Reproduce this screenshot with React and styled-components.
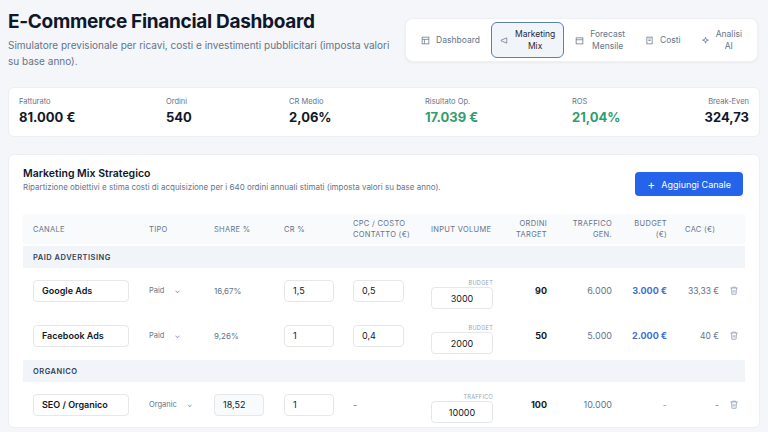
import React from "react";
import styled, { createGlobalStyle } from "styled-components";

const G = createGlobalStyle`
  body{margin:0;background:#f4f6f9;font-family:Inter,"Noto Sans",sans-serif;color:#0f172a;}
  *{box-sizing:border-box;}
`;
const Page = styled.div`padding:9px 8px 0;`;
const Header = styled.div`display:flex;justify-content:space-between;align-items:flex-start;`;
const Title = styled.h1`margin:0;font-size:19px;font-weight:700;letter-spacing:-0.3px;line-height:26px;`;
const Sub = styled.p`margin:2px 0 0;font-size:10px;color:#64748b;width:392px;line-height:16px;`;
const Nav = styled.div`display:flex;align-items:center;gap:2px;background:#fff;border:1px solid #eef0f3;border-radius:8px;padding:3px 6px;margin-right:2px;margin-top:9px;box-shadow:0 1px 3px rgba(0,0,0,.05);`;
const Tab = styled.div`display:flex;align-items:center;gap:6px;height:36px;padding:0 8px;font-size:8.5px;color:${p=>p.$a?"#1e293b":"#64748b"};text-align:center;line-height:12px;border-radius:6px;border:${p=>p.$a?"1.5px solid #5b7fb0":"1.5px solid transparent"};background:${p=>p.$a?"#f1f5f9":"transparent"};`;
const Kpis = styled.div`margin-top:18px;background:#fff;border:1px solid #eceff3;border-radius:6px;display:grid;grid-template-columns:147px 123px 136px 147px 1fr auto;padding:9px 10px 11px;`;
const Kpi = styled.div`display:flex;flex-direction:column;gap:3px;align-items:${p=>p.$r?"flex-end":"flex-start"};`;
const KL = styled.span`font-size:7.5px;color:#64748b;`;
const KV = styled.span`font-size:13px;font-weight:700;color:${p=>p.$g?"#2f9e6e":"#111827"};`;
const Card = styled.div`margin-top:17px;background:#fff;border:1px solid #eceff3;border-radius:6px;padding:8px 14px 0;`;
const CardHead = styled.div`display:flex;justify-content:space-between;align-items:flex-start;padding-right:2px;`;
const CT = styled.div`font-size:10.5px;font-weight:600;margin-top:4px;`;
const CS = styled.div`font-size:8px;color:#64748b;margin-top:2px;`;
const Btn = styled.button`border:none;background:#2563eb;color:#fff;border-radius:4px;font-family:inherit;font-size:9px;height:24px;padding:0 12px;display:flex;align-items:center;gap:6px;margin-top:9px;`;
const Grid = styled.div`display:grid;grid-template-columns:118px 65px 70px 70px 77px 78px 46px 65px 55px 52px 1fr;margin-top:18px;`;
const H = styled.div`background:#f8fafc;height:30px;display:flex;align-items:center;justify-content:${p=>p.$r?"flex-end":"flex-start"};text-align:${p=>p.$r?"right":"left"};font-size:7.5px;color:#64748b;letter-spacing:.3px;line-height:11px;padding-left:${p=>p.$p||0}px;`;
const Group = styled.div`grid-column:1/-1;background:#f1f5f9;height:22px;display:flex;align-items:center;padding-left:10px;font-size:7.5px;font-weight:600;color:#334155;letter-spacing:.5px;margin-top:2px;`;
const C = styled.div`height:${p=>p.$h||45}px;display:flex;align-items:center;justify-content:${p=>p.$r?"flex-end":"flex-start"};font-size:${p=>p.$s||9}px;font-weight:${p=>p.$b?700:400};color:${p=>p.$c||"#64748b"};padding-left:${p=>p.$p||0}px;padding-right:${p=>p.$pr||0}px;`;
const Inp = styled.div`height:22px;width:${p=>p.$w}px;border:1px solid #e5e7eb;border-radius:4px;display:flex;align-items:center;padding-left:8px;font-size:9px;font-weight:${p=>p.$b?600:400};color:#111827;background:${p=>p.$bg||"#fff"};`;
const VolWrap = styled.div`display:flex;flex-direction:column;align-items:flex-end;width:62px;margin-left:8px;margin-top:8px;`;
const VL = styled.span`font-size:5.5px;color:#94a3b8;letter-spacing:.3px;margin-bottom:1px;`;
const Vol = styled(Inp)`justify-content:center;padding:0;width:62px;`;
const Sel = styled.div`display:flex;gap:10px;align-items:center;font-size:7.5px;color:#64748b;padding-left:8px;`;

const Trash = () => (
  <svg width="10" height="11" viewBox="0 0 24 24" fill="none" stroke="#94a3b8" strokeWidth="2"><path d="M3 6h18M8 6V4h8v2M6 6l1 15h10l1-15M10 11v6M14 11v6"/></svg>
);
const Ico = ({d}) => <svg width="9" height="9" viewBox="0 0 24 24" fill="none" stroke="#64748b" strokeWidth="2">{d}</svg>;

const rows = [
  {n:"Google Ads",t:"Paid",s:"16,67%",cr:"1,5",cpc:"0,5",vl:"BUDGET",v:"3000",o:"90",tr:"6.000",b:"3.000 €",cac:"33,33 €"},
  {n:"Facebook Ads",t:"Paid",s:"9,26%",cr:"1",cpc:"0,4",vl:"BUDGET",v:"2000",o:"50",tr:"5.000",b:"2.000 €",cac:"40 €"},
];
function Row({r, org}) {
  return <>
    <C $p={10}><Inp $w={96} $b>{r.n}</Inp></C>
    <C><Sel>{r.t}<span>⌄</span></Sel></C>
    <C $p={8}>{org ? <Inp $w={50} $bg="#f8fafc">{r.s}</Inp> : <span style={{fontSize:8}}>{r.s}</span>}</C>
    <C $p={8}><Inp $w={50}>{r.cr}</Inp></C>
    <C $p={7}>{r.cpc==="-"?"-":<Inp $w={51}>{r.cpc}</Inp>}</C>
    <C><VolWrap><VL>{r.vl}</VL><Vol>{r.v}</Vol></VolWrap></C>
    <C $r $b $c="#111827">{r.o}</C>
    <C $r>{r.tr}</C>
    <C $r $c={r.b==="-"?"#94a3b8":"#3b6fd4"} $b={r.b!=="-"}>{r.b}</C>
    <C $r $s={8.5}>{r.cac}</C>
    <C $r $pr={6}><Trash/></C>
  </>;
}

export default function App() {
  return <Page><G/>
    <Header>
      <div><Title>E-Commerce Financial Dashboard</Title>
      <Sub>Simulatore previsionale per ricavi, costi e investimenti pubblicitari (imposta valori su base anno).</Sub></div>
      <Nav>
        <Tab><Ico d={<><rect x="3" y="3" width="18" height="18"/><path d="M3 9h18M9 9v12"/></>}/>Dashboard</Tab>
        <Tab $a><Ico d={<path d="M3 11l15-6v14L3 13z"/>}/>Marketing<br/>Mix</Tab>
        <Tab><Ico d={<><rect x="3" y="5" width="18" height="16"/><path d="M3 10h18"/></>}/>Forecast<br/>Mensile</Tab>
        <Tab><Ico d={<><rect x="5" y="3" width="14" height="18"/><path d="M9 8h6M9 12h6"/></>}/>Costi</Tab>
        <Tab><Ico d={<path d="M12 3l2 6 6 2-6 2-2 6-2-6-6-2 6-2z"/>}/>Analisi<br/>AI</Tab>
      </Nav>
    </Header>
    <Kpis>
      <Kpi><KL>Fatturato</KL><KV>81.000 €</KV></Kpi>
      <Kpi><KL>Ordini</KL><KV>540</KV></Kpi>
      <Kpi><KL>CR Medio</KL><KV>2,06%</KV></Kpi>
      <Kpi><KL>Risultato Op.</KL><KV $g>17.039 €</KV></Kpi>
      <Kpi><KL>ROS</KL><KV $g>21,04%</KV></Kpi>
      <Kpi $r><KL>Break-Even</KL><KV>324,73</KV></Kpi>
    </Kpis>
    <Card>
      <CardHead>
        <div><CT>Marketing Mix Strategico</CT>
        <CS>Ripartizione obiettivi e stima costi di acquisizione per i 640 ordini annuali stimati (imposta valori su base anno).</CS></div>
        <Btn><span style={{fontSize:12}}>+</span>Aggiungi Canale</Btn>
      </CardHead>
      <Grid>
        <H $p={10}>CANALE</H><H $p={8}>TIPO</H><H $p={8}>SHARE %</H><H $p={8}>CR %</H>
        <H $p={7}>CPC / COSTO<br/>CONTATTO (€)</H><H $p={8}>INPUT VOLUME</H>
        <H $r>ORDINI<br/>TARGET</H><H $r>TRAFFICO<br/>GEN.</H><H $r>BUDGET<br/>(€)</H><H $p={18}>CAC (€)</H><H/>
        <Group>PAID ADVERTISING</Group>
        {rows.map(r=><Row key={r.n} r={r}/>)}
        <Group>ORGANICO</Group>
        <Row org r={{n:"SEO / Organico",t:"Organic",s:"18,52",cr:"1",cpc:"-",vl:"TRAFFICO",v:"10000",o:"100",tr:"10.000",b:"-",cac:"-"}}/>
      </Grid>
    </Card>
  </Page>;
}
